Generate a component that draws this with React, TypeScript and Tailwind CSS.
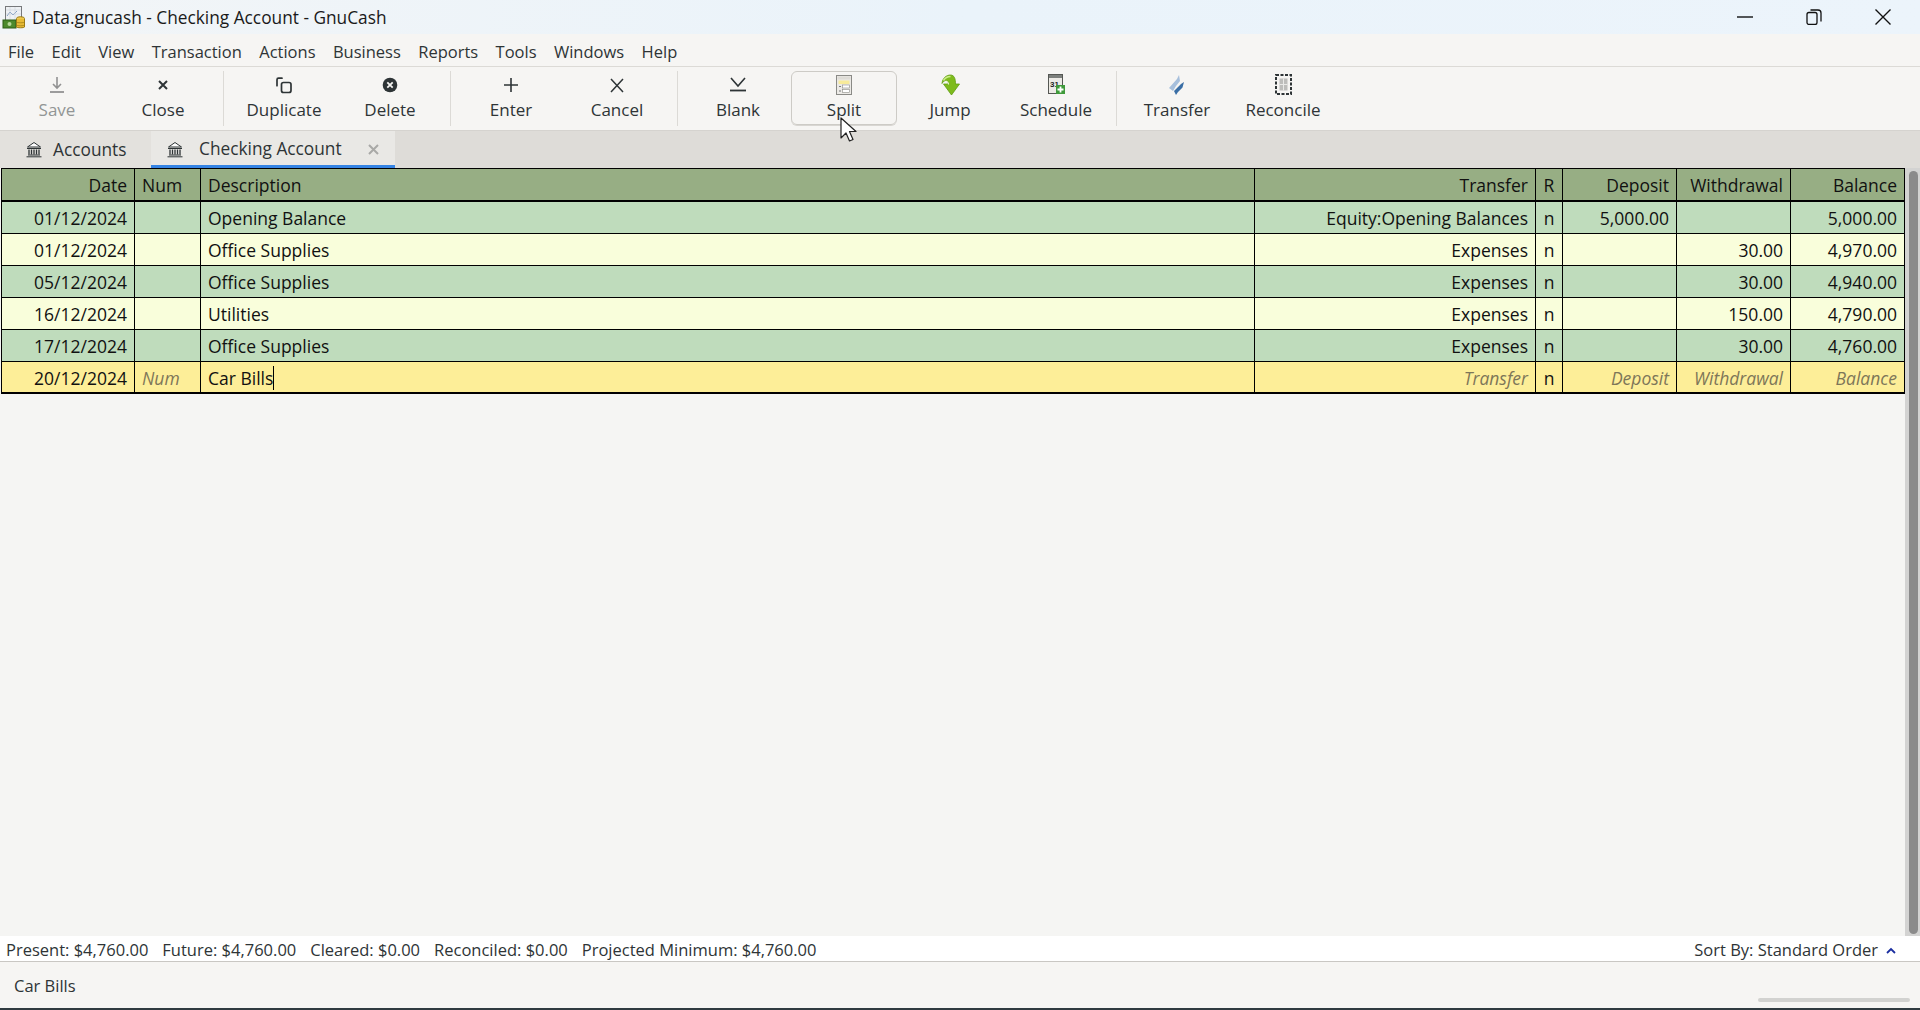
import React from "react";

const FONT = "[font-family:'Open_Sans','Noto_Sans',sans-serif]";
const COLS = "grid grid-cols-[133px_66px_1054px_281px_27px_114px_114px_114px]";

const menus = ["File", "Edit", "View", "Transaction", "Actions", "Business", "Reports", "Tools", "Windows", "Help"];

function Bank({ className = "" }: { className?: string }) {
  return (
    <svg width="16" height="17" viewBox="0 0 16 17" className={className} fill="none" stroke="#2e3436" strokeWidth="1">
      <path d="M1.5 6 8 1.5 14.5 6Z" fill="#fff" />
      <path d="M1 7.5h14M2 14h12M.5 15.8h15" />
      <path d="M3 8.5v5M5.5 8.5v5M8 8.5v5M10.5 8.5v5M13 8.5v5" strokeWidth="1.3" />
    </svg>
  );
}

function AppIcon() {
  return (
    <svg width="24" height="24" viewBox="0 0 24 24" className="shrink-0">
      <rect x="3.5" y="1.5" width="16" height="14" fill="#eef1f4" stroke="#77797b" />
      <path d="M5 11 8 7l3 3 4-4" fill="none" stroke="#7f9cc0" />
      <path d="M4 5h15M4 9h15M8 2v13M13 2v13" stroke="#cfd5db" strokeWidth=".6" />
      <rect x="1" y="15" width="13" height="8" fill="#4d8a2c" stroke="#2d5c16" />
      <circle cx="7.5" cy="19" r="2" fill="#b7d89a" />
      <ellipse cx="18.5" cy="13.5" rx="4" ry="1.8" fill="#efc94c" stroke="#9a7a15" />
      <path d="M14.5 14v8c0 1 8 1 8 0v-8" fill="#e8bb35" stroke="#9a7a15" />
      <path d="M14.5 17c0 1 8 1 8 0M14.5 20c0 1 8 1 8 0" fill="none" stroke="#9a7a15" strokeWidth=".7" />
    </svg>
  );
}

const icons: Record<string, React.ReactNode> = {
  Save: (
    <svg width="16" height="18" viewBox="0 0 16 18" fill="none" stroke="#929292" strokeWidth="1.6">
      <path d="M8 1v10M4 8l4 4 4-4" />
      <path d="M1 16h14" strokeWidth="1.8" />
    </svg>
  ),
  Close: (
    <svg width="16" height="18" viewBox="0 0 16 18" fill="none" stroke="#2e3436" strokeWidth="2">
      <path d="M4 5l8 8M12 5l-8 8" />
    </svg>
  ),
  Duplicate: (
    <svg width="18" height="18" viewBox="0 0 18 18" fill="none" stroke="#2e3436" strokeWidth="1.7">
      <path d="M7 2.200H3.500a1.500 1.500 0 0 0-1.500 1.500v6" strokeLinecap="round" />
      <rect x="6.500" y="6.500" width="9.500" height="10" rx="2" />
    </svg>
  ),
  Delete: (
    <svg width="16" height="18" viewBox="0 0 16 18">
      <circle cx="8" cy="9" r="7.300" fill="#2e3436" />
      <path d="M5.300 6.300l5.400 5.400M10.700 6.300l-5.400 5.400" stroke="#f6f5f3" strokeWidth="1.800" />
    </svg>
  ),
  Enter: (
    <svg width="16" height="18" viewBox="0 0 16 18" fill="none" stroke="#2e3436" strokeWidth="1.6">
      <path d="M8 2v14M1 9h14" />
    </svg>
  ),
  Cancel: (
    <svg width="16" height="18" viewBox="0 0 16 18" fill="none" stroke="#2e3436" strokeWidth="1.5">
      <path d="M2 3l12 13M14 3L2 16" />
    </svg>
  ),
  Blank: (
    <svg width="18" height="18" viewBox="0 0 18 18" fill="none" stroke="#2e3436" strokeWidth="1.6">
      <path d="M2 2l7 8 7-8" />
      <path d="M1 14.500h16" strokeWidth="1.800" />
    </svg>
  ),
  Split: (
    <svg width="16" height="20" viewBox="0 0 16 20">
      <rect x=".5" y=".5" width="15" height="19" fill="#eceae6" stroke="#8a8a86" />
      <rect x="1.500" y="1.500" width="13" height="3" fill="#dedcd6" />
      <rect x="2.500" y="5.500" width="11" height="3.500" fill="#f8eb9a" />
      <rect x="6.500" y="10" width="7" height="3" fill="#fff" stroke="#8a8a86" strokeWidth=".6" />
      <rect x="6.500" y="14.500" width="7" height="3" fill="#fff" stroke="#8a8a86" strokeWidth=".6" />
      <path d="M3 11.500h2M3 16h2" stroke="#77797b" />
    </svg>
  ),
  Jump: (
    <svg width="19" height="22" viewBox="0 0 19 22">
      <path d="M1 9.500C1.500 4 5.500 1 9.500 1 13.500 1 14.500 5 14.500 10H18.500L10.500 21 2.500 10H7C7.200 7.500 6 6 4.500 6.500 3 7 1.800 8 1 9.500Z" fill="#7ebb1c" stroke="#5f9c10" strokeWidth=".8" />
      <path d="M2.500 6.500C4 4 6.500 2.500 9.500 2.500" stroke="#cdee8a" strokeWidth="1.500" fill="none" />
      <path d="M4.500 7.500c1.500-.5 3 1 3 3" stroke="#eef5dc" strokeWidth="1.200" fill="none" />
    </svg>
  ),
  Schedule: (
    <svg width="17" height="21" viewBox="0 0 17 21">
      <rect x=".5" y=".5" width="14" height="19" fill="#eceae6" stroke="#555753" />
      <rect x="1" y="1" width="13" height="3" fill="#7c7f7c" />
      <text x="2" y="13" fontSize="8" fontWeight="700" fill="#222" fontFamily="'Liberation Sans',sans-serif">31</text>
      <rect x="8" y="11" width="9" height="9" fill="#3f9a3a" />
      <path d="M12.500 12.500v6M9.500 15.500h6" stroke="#fff" strokeWidth="1.800" />
    </svg>
  ),
  Transfer: (
    <svg width="18" height="22" viewBox="0 0 18 22">
      <path d="M1 14 9 5l2-4 1 6-4 5-3 5Z" fill="#a6bfdc" />
      <path d="M6 17l7-7 3-2-1.500 5.500L10 18l-2 3Z" fill="#3a6ea5" />
    </svg>
  ),
  Reconcile: (
    <svg width="17" height="21" viewBox="0 0 17 21">
      <rect x="1" y="1" width="15" height="19" fill="none" stroke="#2e3436" strokeWidth="2" strokeDasharray="3 1.500" />
      <rect x="4.500" y="4.500" width="8" height="12" fill="#bdbdbb" />
      <path d="M8.500 4.500v12M4.500 10.500h8" stroke="#e9e9e7" />
    </svg>
  ),
};

function ToolBtn({ name, dim, hover }: { name: string; dim?: boolean; hover?: boolean }) {
  return (
    <div
      className={`w-[106px] h-[54px] flex flex-col items-center rounded-md border ${
        hover ? "border-[#cdcbc6] shadow-[0_1px_0_#d8d6d2]" : "border-transparent"
      }`}
    >
      <div className="h-[23px] mt-[1px] flex items-center justify-center">{icons[name]}</div>
      <div className={`text-[17px] leading-[24px] mt-[2px] ${dim ? "text-[#929595]" : "text-[#2e3436]"}`}>{name}</div>
    </div>
  );
}

const Sep = () => <div className="w-px h-[55px] bg-[#dcdad6] mx-[7px] shrink-0" />;

type Row = { date: string; desc: string; transfer: string; r: string; dep: string; wd: string; bal: string };
const rows: Row[] = [
  { date: "01/12/2024", desc: "Opening Balance", transfer: "Equity:Opening Balances", r: "n", dep: "5,000.00", wd: "", bal: "5,000.00" },
  { date: "01/12/2024", desc: "Office Supplies", transfer: "Expenses", r: "n", dep: "", wd: "30.00", bal: "4,970.00" },
  { date: "05/12/2024", desc: "Office Supplies", transfer: "Expenses", r: "n", dep: "", wd: "30.00", bal: "4,940.00" },
  { date: "16/12/2024", desc: "Utilities", transfer: "Expenses", r: "n", dep: "", wd: "150.00", bal: "4,790.00" },
  { date: "17/12/2024", desc: "Office Supplies", transfer: "Expenses", r: "n", dep: "", wd: "30.00", bal: "4,760.00" },
];

function Cell({ children, align = "r", italic }: { children?: React.ReactNode; align?: "l" | "r" | "c"; italic?: boolean }) {
  const a = align === "r" ? "justify-end pr-[7px]" : align === "l" ? "justify-start pl-[7px]" : "justify-center";
  return (
    <div className={`flex items-center pt-[2px] ${a} border-r border-black overflow-hidden whitespace-nowrap ${italic ? "italic text-[#7d7659]" : ""}`}>
      {children}
    </div>
  );
}

export default function App() {
  return (
    <div className={`${FONT} relative w-[1920px] h-[1010px] overflow-hidden flex flex-col bg-[#f5f5f3] text-[#2e3436]`}>
      {/* title bar */}
      <div className="h-[34px] shrink-0 flex items-center bg-gradient-to-r from-[#f2f5f7] via-[#eaf3fa] to-[#ecf4fb]">
        <div className="pl-[2px] pr-[6px] flex items-center"><AppIcon /></div>
        <div className="text-[17.3px] text-[#1a1a1a] pt-[2px]">Data.gnucash - Checking Account - GnuCash</div>
        <div className="ml-auto flex pr-[3px] items-center">
          <div className="w-[69px] flex justify-center">
            <svg width="16" height="16" viewBox="0 0 16 16"><path d="M0 8h16" stroke="#111" strokeWidth="1.400" /></svg>
          </div>
          <div className="w-[69px] flex justify-center">
            <svg width="16" height="16" viewBox="0 0 16 16" fill="none" stroke="#111" strokeWidth="1.300">
              <rect x="1" y="3.500" width="10" height="12" rx="2" />
              <path d="M4.500 1H12a3 3 0 0 1 3 3v8.500" />
            </svg>
          </div>
          <div className="w-[69px] flex justify-center">
            <svg width="16" height="16" viewBox="0 0 16 16" fill="none" stroke="#111" strokeWidth="1.400"><path d="M.5.500l15 15M15.500.500l-15 15" /></svg>
          </div>
        </div>
      </div>

      {/* menu bar */}
      <div className="h-[33px] shrink-0 flex items-center gap-[17.400px] pl-[8px] pt-[4px] border-b border-[#dcdad6] bg-[#f6f5f3] text-[16.500px]">
        {menus.map((m) => (
          <span key={m}>{m}</span>
        ))}
      </div>

      {/* toolbar */}
      <div className="h-[64px] shrink-0 flex items-start pt-[4px] pl-[4px] border-b border-[#d5d3cf] bg-[#f6f5f3]">
        <ToolBtn name="Save" dim />
        <ToolBtn name="Close" />
        <Sep />
        <ToolBtn name="Duplicate" />
        <ToolBtn name="Delete" />
        <Sep />
        <ToolBtn name="Enter" />
        <ToolBtn name="Cancel" />
        <Sep />
        <ToolBtn name="Blank" />
        <ToolBtn name="Split" hover />
        <ToolBtn name="Jump" />
        <ToolBtn name="Schedule" />
        <Sep />
        <ToolBtn name="Transfer" />
        <ToolBtn name="Reconcile" />
      </div>

      {/* tab bar */}
      <div className="h-[37px] shrink-0 flex bg-[#dedcd8] text-[17.3px]">
        <div className="w-[151px] flex items-center pl-[26px] bg-[#e3e1dd]">
          <Bank />
          <span className="ml-[11px]">Accounts</span>
        </div>
        <div className="w-[244px] flex items-center pl-[16px] pt-[2px] bg-[#e9e8e5] border-b-[3px] border-[#3584e4]">
          <Bank />
          <span className="ml-[16px]">Checking Account</span>
          <svg width="11" height="11" viewBox="0 0 11 11" className="ml-[26px]" fill="none" stroke="#a9a9a7" strokeWidth="2"><path d="M1 1l9 9M10 1l-9 9" /></svg>
        </div>
      </div>

      {/* register */}
      <div className="flex-1 min-h-0 flex">
        <div className="flex-1 min-w-0 pl-px">
          <div className="border-l border-t border-black text-[17.5px] text-[#111]">
            <div className={`${COLS} h-[33px] bg-[#97ae84] border-b-2 border-black leading-none`}>
              <Cell>Date</Cell>
              <Cell align="l">Num</Cell>
              <Cell align="l">Description</Cell>
              <Cell>Transfer</Cell>
              <Cell align="c">R</Cell>
              <Cell>Deposit</Cell>
              <Cell>Withdrawal</Cell>
              <Cell>Balance</Cell>
            </div>
            {rows.map((r, i) => (
              <div key={i} className={`${COLS} h-[32px] border-b border-black ${i % 2 === 0 ? "bg-[#bfdcbc]" : "bg-[#f9fedb]"}`}>
                <Cell>{r.date}</Cell>
                <Cell />
                <Cell align="l">{r.desc}</Cell>
                <Cell>{r.transfer}</Cell>
                <Cell align="c">{r.r}</Cell>
                <Cell>{r.dep}</Cell>
                <Cell>{r.wd}</Cell>
                <Cell>{r.bal}</Cell>
              </div>
            ))}
            <div className={`${COLS} h-[32px] border-b-2 border-black bg-[#fdee98]`}>
              <Cell>20/12/2024</Cell>
              <Cell align="l" italic>Num</Cell>
              <Cell align="l">
                <span>Car Bills</span>
                <span className="inline-block w-px h-[24px] bg-black" />
              </Cell>
              <Cell italic>Transfer</Cell>
              <Cell align="c">n</Cell>
              <Cell italic>Deposit</Cell>
              <Cell italic>Withdrawal</Cell>
              <Cell italic>Balance</Cell>
            </div>
          </div>
        </div>
        <div className="w-[15px] shrink-0 bg-[#d3d3d2] flex justify-center pt-[3px] pb-[2px]">
          <div className="w-[9px] h-full ml-[1px] rounded-full bg-[#8b8b8b]" />
        </div>
      </div>

      {/* summary bar */}
      <div className="h-[26px] shrink-0 flex items-center pl-[6px] pr-[24px] pt-[3px] bg-white border-b border-[#c9c7c3] text-[16.5px] whitespace-nowrap">
        <div className="flex gap-[14px]">
          <span>Present: $4,760.00</span>
          <span>Future: $4,760.00</span>
          <span>Cleared: $0.00</span>
          <span>Reconciled: $0.00</span>
          <span>Projected Minimum: $4,760.00</span>
        </div>
        <div className="ml-auto flex items-center gap-[8px]">
          <span>Sort By: Standard Order</span>
          <svg width="10" height="7" viewBox="0 0 10 7" fill="none" stroke="#1a2ea0" strokeWidth="1.800"><path d="M1 6l4-4 4 4" /></svg>
        </div>
      </div>

      {/* status bar */}
      <div className="h-[46px] shrink-0 flex items-center justify-between pl-[14px] pr-[10px] pt-[3px] text-[16.5px] bg-[#f6f5f3]">
        <span>Car Bills</span>
        <div className="w-[152px] h-[4px] rounded-full bg-[#d2d2d0] mt-[26px]" />
      </div>
      <div className="h-[2px] shrink-0 bg-[#2f3a40]" />

      {/* mouse pointer */}
      <svg width="20" height="28" viewBox="0 0 20 28" className="absolute left-[840px] top-[117px]">
        <path d="M1 1v20l5-5 3.500 8 3.500-1.500-3.500-8H16Z" fill="#fff" stroke="#222" strokeWidth="1.200" strokeLinejoin="round" />
      </svg>
    </div>
  );
}
